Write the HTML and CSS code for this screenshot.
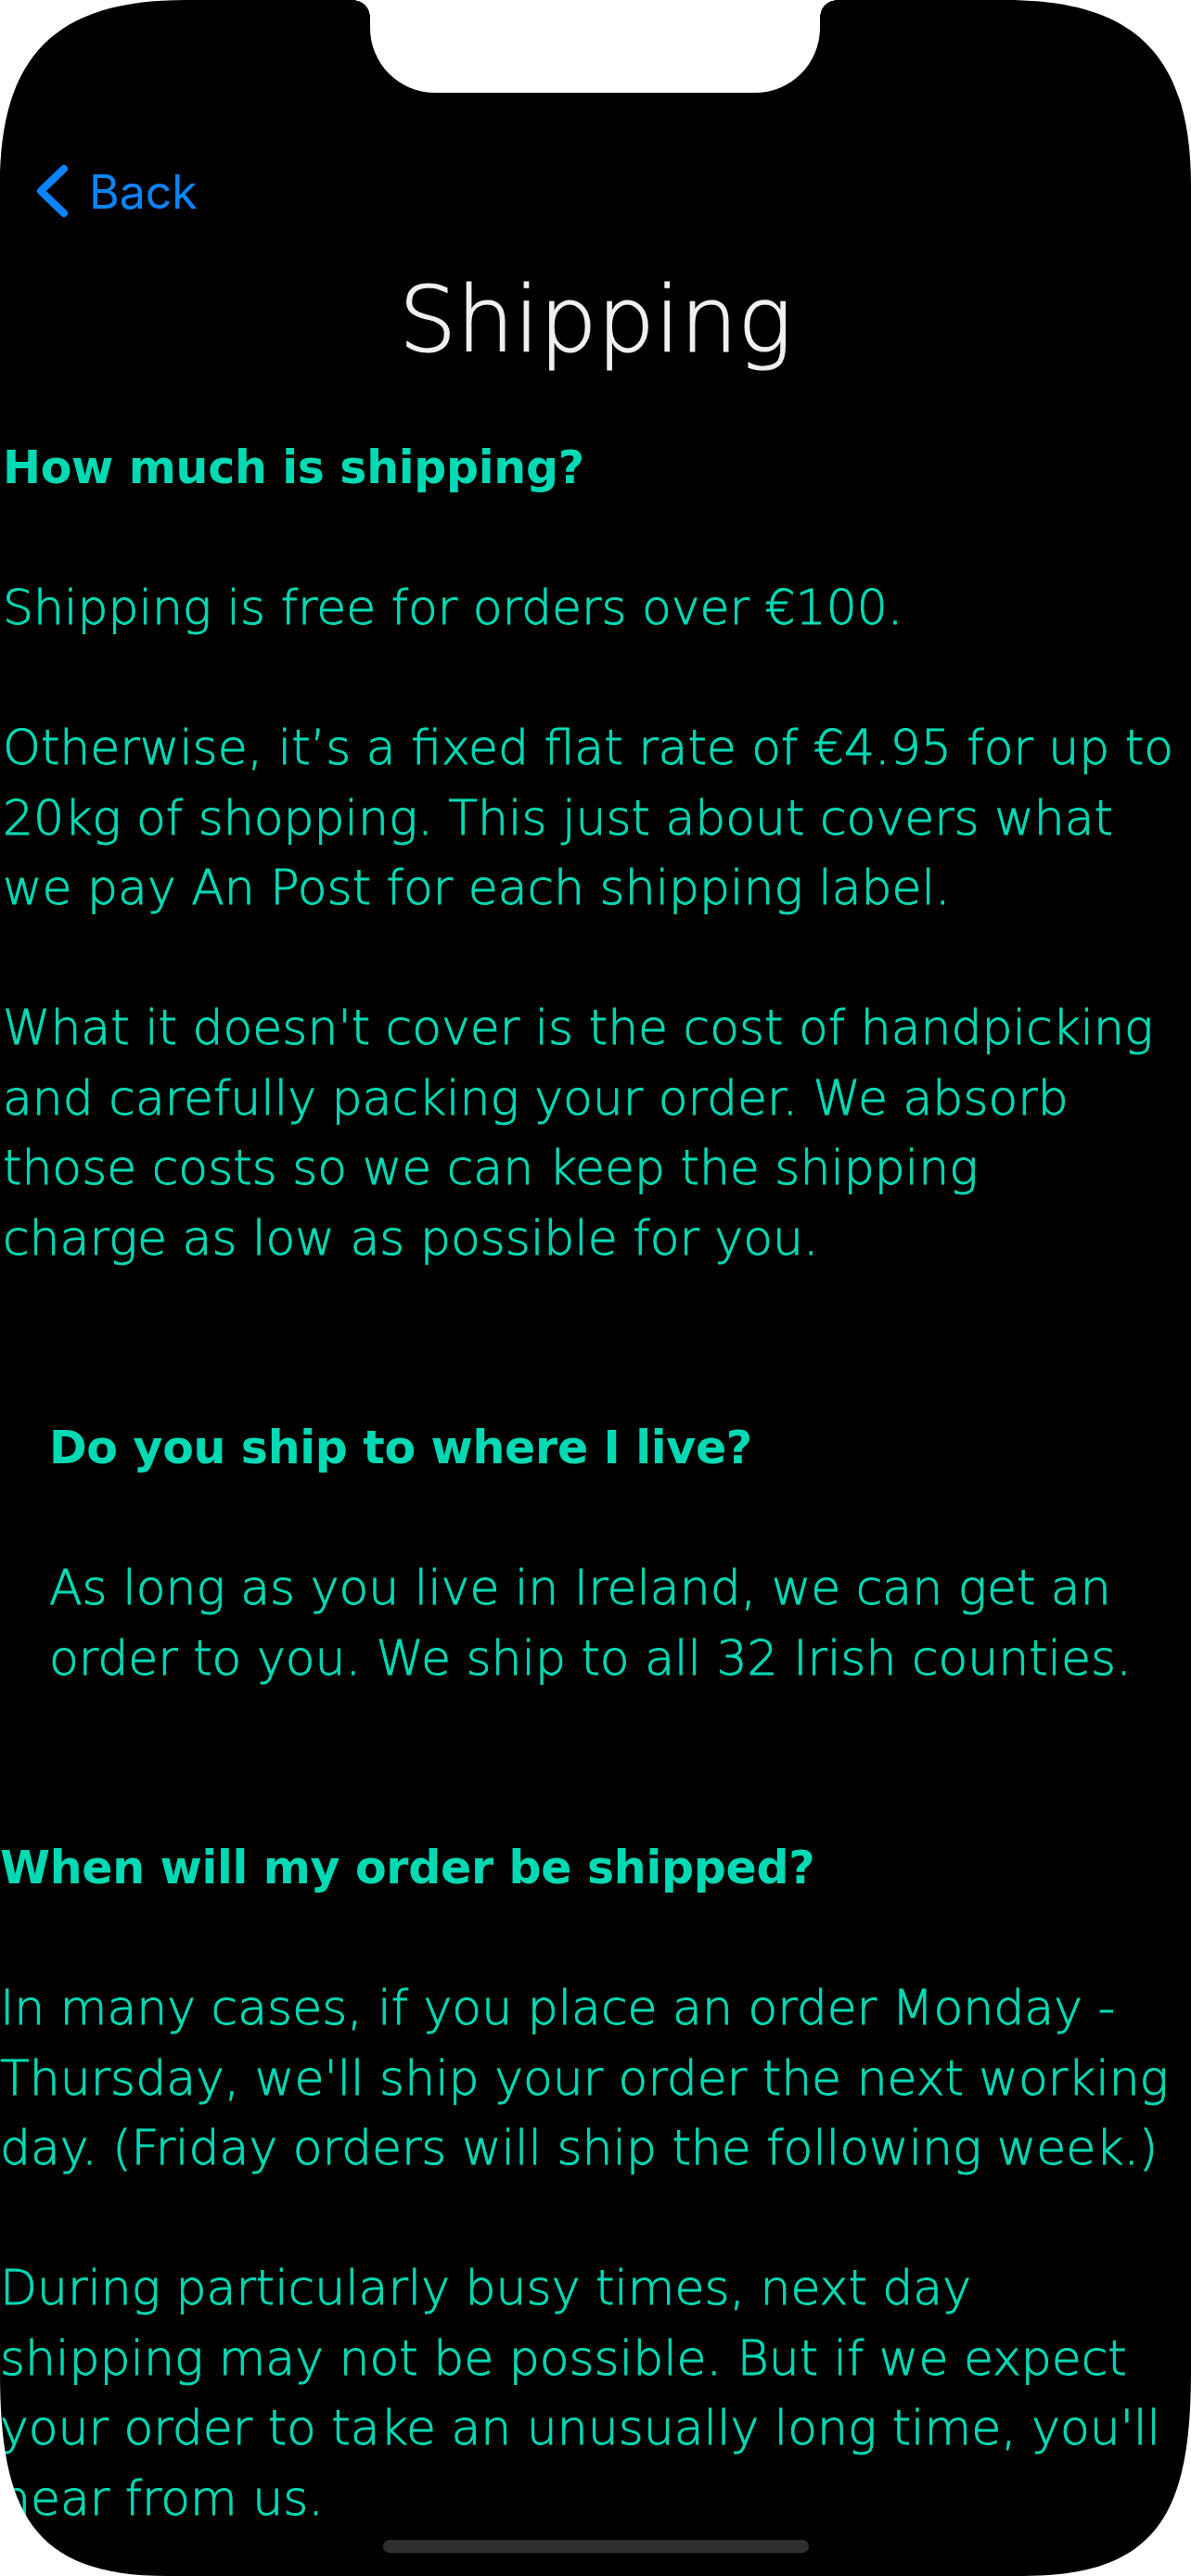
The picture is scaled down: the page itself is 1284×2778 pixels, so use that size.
FILE: index.html
```html
<!DOCTYPE html>
<html lang="en">
<head>
<meta charset="utf-8">
<title>Shipping</title>
<link rel="stylesheet" href="styles.css">
</head>
<body>
<div class="phone">
  <main class="screen">
    <nav class="nav">
      <a class="back" href="#">
        <svg class="chevron" width="40" height="60" viewBox="0 0 40 60" aria-hidden="true">
          <path d="M33 5 L8 29 L33 53" fill="none" stroke="currentColor" stroke-width="8" stroke-linecap="round" stroke-linejoin="round"/>
        </svg>
        <span>Back</span>
      </a>
    </nav>
    <h1 class="title">Shipping</h1>

    <section class="faq faq-first">
      <h2>How much is shipping?</h2>
      <p>Shipping is free for orders over €100.</p>
      <p>Otherwise, it’s a fixed flat rate of €4.95 for up to<br>20kg of shopping. This just about covers what<br>we pay An Post for each shipping label.</p>
      <p>What it doesn't cover is the cost of handpicking<br>and carefully packing your order. We absorb<br>those costs so we can keep the shipping<br>charge as low as possible for you.</p>
    </section>

    <section class="faq faq-indented">
      <h2>Do you ship to where I live?</h2>
      <p>As long as you live in Ireland, we can get an<br>order to you. We ship to all 32 Irish counties.</p>
    </section>

    <section class="faq faq-flush">
      <h2>When will my order be shipped?</h2>
      <p>In many cases, if you place an order Monday -<br>Thursday, we'll ship your order the next working<br>day. (Friday orders will ship the following week.)</p>
      <p>During particularly busy times, next day<br>shipping may not be possible. But if we expect<br>your order to take an unusually long time, you'll<br>hear from us.</p>
    </section>
  </main>

  <div class="notch"></div>
  <div class="home-indicator"></div>

  <svg class="corner corner-top corner-left" width="200" height="200" viewBox="0 0 200 200" aria-hidden="true">
    <path d="M0 0 H200 C60 0 0 60 0 200 Z" fill="#ffffff"/>
  </svg>
  <svg class="corner corner-top corner-right" width="200" height="200" viewBox="0 0 200 200" aria-hidden="true">
    <path d="M0 0 H200 C60 0 0 60 0 200 Z" fill="#ffffff"/>
  </svg>
  <svg class="corner corner-bottom corner-left" width="180" height="220" viewBox="0 0 180 220" aria-hidden="true">
    <path d="M0 0 C0 150 35 220 180 220 L0 220 Z" fill="#ffffff"/>
  </svg>
  <svg class="corner corner-bottom corner-right" width="180" height="220" viewBox="0 0 180 220" aria-hidden="true">
    <path d="M0 0 C0 150 35 220 180 220 L0 220 Z" fill="#ffffff"/>
  </svg>
</div>
</body>
</html>
```

FILE: styles.css
```css
html, body {
  margin: 0;
  padding: 0;
  background: #ffffff;
}

.phone {
  position: relative;
  width: 1284px;
  height: 2778px;
  background: #000000;
  overflow: hidden;
}

.screen {
  padding-top: 177px;
}

.nav {
  height: 60px;
  display: flex;
  align-items: center;
  padding-left: 36px;
}

.back {
  display: flex;
  align-items: center;
  color: #0a84ff;
  text-decoration: none;
  font-family: Inter, "Liberation Sans", sans-serif;
  font-weight: 400;
  font-size: 50px;
  line-height: 60px;
}

.chevron {
  display: block;
  margin-right: 20px;
}

.title {
  margin: 50px 0 0;
  text-align: center;
  color: #f0f0f0;
  font-family: "DejaVu Sans", sans-serif;
  font-weight: 200;
  font-size: 98px;
  line-height: 117.6px;
  -webkit-text-stroke: 1.2px #f0f0f0;
}

.faq {
  padding-bottom: 75.5px;
  color: #00dab4;
  font-family: "DejaVu Sans", sans-serif;
  white-space: nowrap;
}

.faq-first {
  margin-top: 62.5px;
  padding-left: 3px;
}

.faq-indented {
  padding-left: 53px;
}

.faq-flush {
  padding-left: 0;
}

.faq h2 {
  margin: 0 0 75.5px;
  font-weight: 700;
  font-size: 49px;
  line-height: 75.5px;
  letter-spacing: -0.3px;
}

.faq p {
  margin: 0 0 75.5px;
  font-weight: 300;
  font-size: 52px;
  line-height: 75.5px;
  -webkit-text-stroke: 0.9px #00dab4;
}

.notch {
  position: absolute;
  top: 0;
  left: 399px;
  width: 485px;
  height: 100px;
  background: #ffffff;
  border-radius: 0 0 70px 70px;
}

.notch::before,
.notch::after {
  content: "";
  position: absolute;
  top: 0;
  width: 18px;
  height: 18px;
}

.notch::before {
  left: -18px;
  background: radial-gradient(circle at 0 100%, transparent 17.5px, #ffffff 18px);
}

.notch::after {
  right: -18px;
  background: radial-gradient(circle at 100% 100%, transparent 17.5px, #ffffff 18px);
}

.home-indicator {
  position: absolute;
  left: 413px;
  bottom: 25px;
  width: 459px;
  height: 14px;
  border-radius: 7px;
  background: #2f2f2f;
}

.corner {
  position: absolute;
  display: block;
}

.corner-top {
  top: 0;
}

.corner-bottom {
  bottom: 0;
}

.corner-left {
  left: 0;
}

.corner-right {
  right: 0;
  transform: scaleX(-1);
}
```
